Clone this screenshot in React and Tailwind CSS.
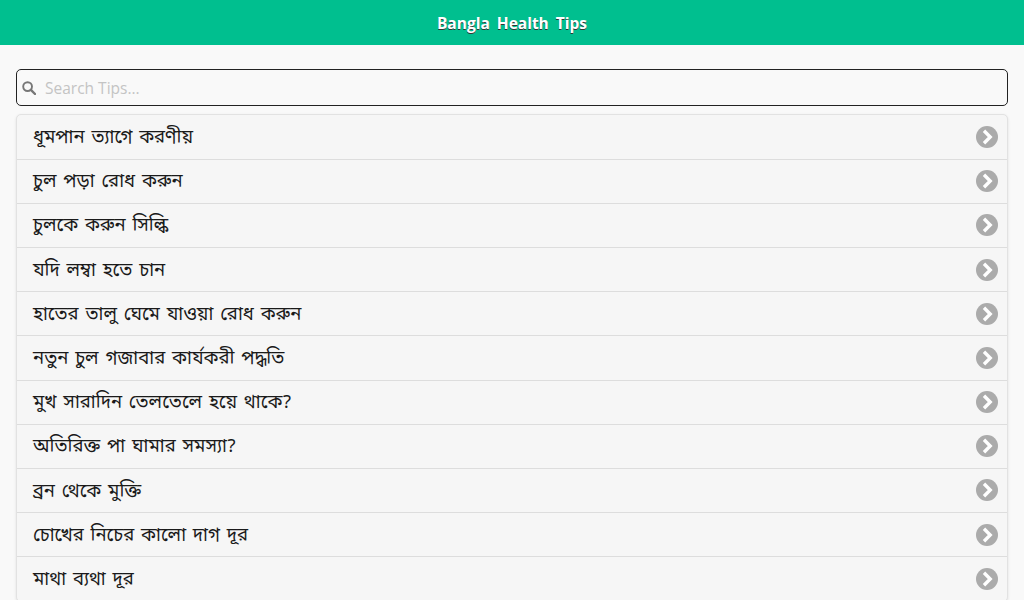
const tips = [
  'ধূমপান ত্যাগে করণীয়',
  'চুল পড়া রোধ করুন',
  'চুলকে করুন সিল্কি',
  'যদি লম্বা হতে চান',
  'হাতের তালু ঘেমে যাওয়া রোধ করুন',
  'নতুন চুল গজাবার কার্যকরী পদ্ধতি',
  'মুখ সারাদিন তেলতেলে হয়ে থাকে?',
  'অতিরিক্ত পা ঘামার সমস্যা?',
  'ব্রন থেকে মুক্তি',
  'চোখের নিচের কালো দাগ দূর',
  'মাথা ব্যথা দূর',
];

const Chevron = () => (
  <svg width="22" height="22" viewBox="0 0 22 22" className="shrink-0">
    <circle cx="11" cy="11" r="11" fill="#ababab" />
    <path d="M8 4.8 L14.2 11 L8 17.2" fill="none" stroke="#fff" strokeWidth="3.4" />
  </svg>
);

const SearchIcon = () => (
  <svg width="14" height="14" viewBox="0 0 14 14" className="shrink-0">
    <circle cx="5.6" cy="5.6" r="4.4" fill="none" stroke="#777" strokeWidth="1.9" />
    <path d="M8.9 8.9 L13 13" stroke="#777" strokeWidth="2.4" strokeLinecap="round" />
  </svg>
);

export default function App() {
  return (
    <div className="h-[600px] overflow-hidden bg-[#f9f9f9] font-['Open_Sans','Noto_Sans',sans-serif]">
      <header className="h-[45px] pt-[2px] bg-[#00bf8f] flex items-center justify-center">
        <h1 className="text-[15.5px] font-bold text-white [word-spacing:3px] [text-shadow:0_1px_0_#333]">
          Bangla Health Tips
        </h1>
      </header>

      <main className="px-4 pt-6">
        <div className="h-[37px] flex items-center gap-[9px] pl-[5px] bg-[#f9f9f9] border border-[#222] rounded-[5px]">
          <SearchIcon />
          <input
            placeholder="Search Tips..."
            className="flex-1 pt-[2px] bg-transparent outline-none text-[15.5px] text-[#333] placeholder:text-[#c4c4c4]"
          />
        </div>

        <ul className="mt-[8.4px] bg-[#f6f6f6] border border-[#e2e2e2] rounded-[5px] shadow-[0_1px_3px_rgba(0,0,0,0.1)]">
          {tips.map((tip) => (
            <li
              key={tip}
              className="h-[44.2px] flex items-center justify-between pl-4 pr-[9px] border-b border-[#dddddd]"
            >
              <span className="relative top-[2px] text-[18.5px] text-[#1a1a1a] [word-spacing:2px] font-['Noto_Sans_Bengali','Lohit_Bengali','Noto_Sans',sans-serif]">{tip}</span>
              <Chevron />
            </li>
          ))}
        </ul>
      </main>
    </div>
  );
}
